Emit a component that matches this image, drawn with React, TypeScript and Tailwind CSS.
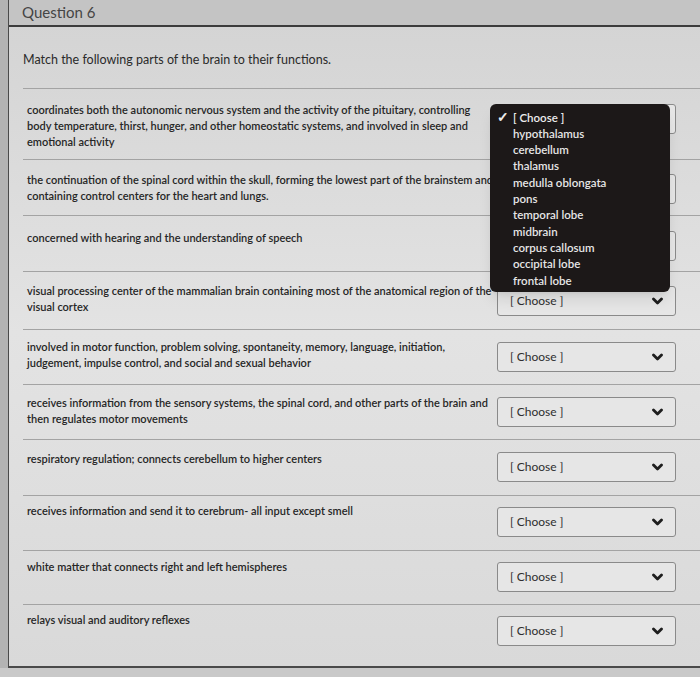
import React from "react";

type Row = {
  lines: string[];
  h: string;
  pt: string;
  mt: string;
  last?: boolean;
};

const rows: Row[] = [
  {
    lines: [
      "coordinates both the autonomic nervous system and the activity of the pituitary, controlling",
      "body temperature, thirst, hunger, and other homeostatic systems, and involved in sleep and",
      "emotional activity",
    ],
    h: "h-[71px]",
    pt: "pt-[13px]",
    mt: "mt-[15px]",
  },
  {
    lines: [
      "the continuation of the spinal cord within the skull, forming the lowest part of the brainstem and",
      "containing control centers for the heart and lungs.",
    ],
    h: "h-[56px]",
    pt: "pt-[12px]",
    mt: "mt-[14px]",
  },
  {
    lines: ["concerned with hearing and the understanding of speech"],
    h: "h-[56px]",
    pt: "pt-[14px]",
    mt: "mt-[15px]",
  },
  {
    lines: [
      "visual processing center of the mammalian brain containing most of the anatomical region of the",
      "visual cortex",
    ],
    h: "h-[58px]",
    pt: "pt-[11px]",
    mt: "mt-[14px]",
  },
  {
    lines: [
      "involved in motor function, problem solving, spontaneity, memory, language, initiation,",
      "judgement, impulse control, and social and sexual behavior",
    ],
    h: "h-[55px]",
    pt: "pt-[9px]",
    mt: "mt-[12px]",
  },
  {
    lines: [
      "receives information from the sensory systems, the spinal cord, and other parts of the brain and",
      "then regulates motor movements",
    ],
    h: "h-[55px]",
    pt: "pt-[10px]",
    mt: "mt-[12px]",
  },
  {
    lines: ["respiratory regulation; connects cerebellum to higher centers"],
    h: "h-[56px]",
    pt: "pt-[11px]",
    mt: "mt-[12px]",
  },
  {
    lines: ["receives information and send it to cerebrum- all input except smell"],
    h: "h-[55px]",
    pt: "pt-[7px]",
    mt: "mt-[11px]",
  },
  {
    lines: ["white matter that connects right and left hemispheres"],
    h: "h-[54px]",
    pt: "pt-[8px]",
    mt: "mt-[11px]",
  },
  {
    lines: ["relays visual and auditory reflexes"],
    h: "h-[62px]",
    pt: "pt-[7px]",
    mt: "mt-[11px]",
    last: true,
  },
];

const options = [
  "hypothalamus",
  "cerebellum",
  "thalamus",
  "medulla oblongata",
  "pons",
  "temporal lobe",
  "midbrain",
  "corpus callosum",
  "occipital lobe",
  "frontal lobe",
];

function Chevron() {
  return (
    <svg width="11" height="8" viewBox="0 0 11 8" className="shrink-0">
      <polyline
        points="1.5,2 5.5,6 9.5,2"
        fill="none"
        stroke="#1e1e1e"
        strokeWidth="2.8"
        strokeLinecap="round"
        strokeLinejoin="round"
      />
    </svg>
  );
}

function SelectBox({ mt }: { mt: string }) {
  return (
    <div
      className={`${mt} flex h-[30px] w-[179px] shrink-0 items-center justify-between rounded-[3px] border border-[#8a8a8a] bg-[#e6e6e6] pl-[12px] pr-[12px]`}
    >
      <span className="text-[12px] text-[#2e2e2e]">[ Choose ]</span>
      <Chevron />
    </div>
  );
}

export default function App() {
  return (
    <div
      className="relative h-[677px] w-[700px] overflow-hidden bg-[#c9c9c9]"
      style={{ fontFamily: "Lato, 'Open Sans', sans-serif" }}
    >
      <div className="h-[668px] bg-[#b3b3b3] pl-[8px]">
        <div className="h-[668px] border-b-2 border-l border-[#4a4a4a] bg-linear-to-b from-[#d3d3d3] via-[#e3e3e3] to-[#d9d9d9]">
          <div className="flex h-[27px] items-center border-b-2 border-[#3c3c3c] bg-[#c4c4c4] pl-[13px]">
            <span className="text-[15px] leading-none text-[#454545]">Question 6</span>
          </div>
          <div className="pl-[14px]">
            <div className="h-[62px] border-b border-[#a3a3a3] pt-[25px]">
              <p className="text-[12.5px] leading-4 text-[#2a2a2a]">
                Match the following parts of the brain to their functions.
              </p>
            </div>
            {rows.map((r, i) => (
              <div
                key={i}
                className={`${r.h} flex items-start ${r.last ? "" : "border-b border-[#a3a3a3]"}`}
              >
                <div
                  className={`${r.pt} w-[474px] shrink-0 pl-[4px] text-[11px] font-semibold leading-4 text-[#262626]`}
                >
                  {r.lines.map((l, j) => (
                    <div key={j} className="whitespace-nowrap">
                      {l}
                    </div>
                  ))}
                </div>
                <SelectBox mt={r.mt} />
              </div>
            ))}
          </div>
        </div>
      </div>

      <div className="absolute left-[490px] top-[104px] h-[188px] w-[180px] rounded-[6px] bg-[#1c1818] pl-[7px] pt-[5px] shadow-lg">
        <div className="flex h-[16.3px] items-center gap-[4px] text-[11.5px] font-semibold text-[#ececec]">
          <span className="w-[12px] text-[14px] font-bold leading-none">✓</span>
          <span>[ Choose ]</span>
        </div>
        {options.map((o) => (
          <div
            key={o}
            className="flex h-[16.3px] items-center pl-[16px] text-[11.5px] font-semibold text-[#e6e6e6]"
          >
            {o}
          </div>
        ))}
      </div>
    </div>
  );
}
